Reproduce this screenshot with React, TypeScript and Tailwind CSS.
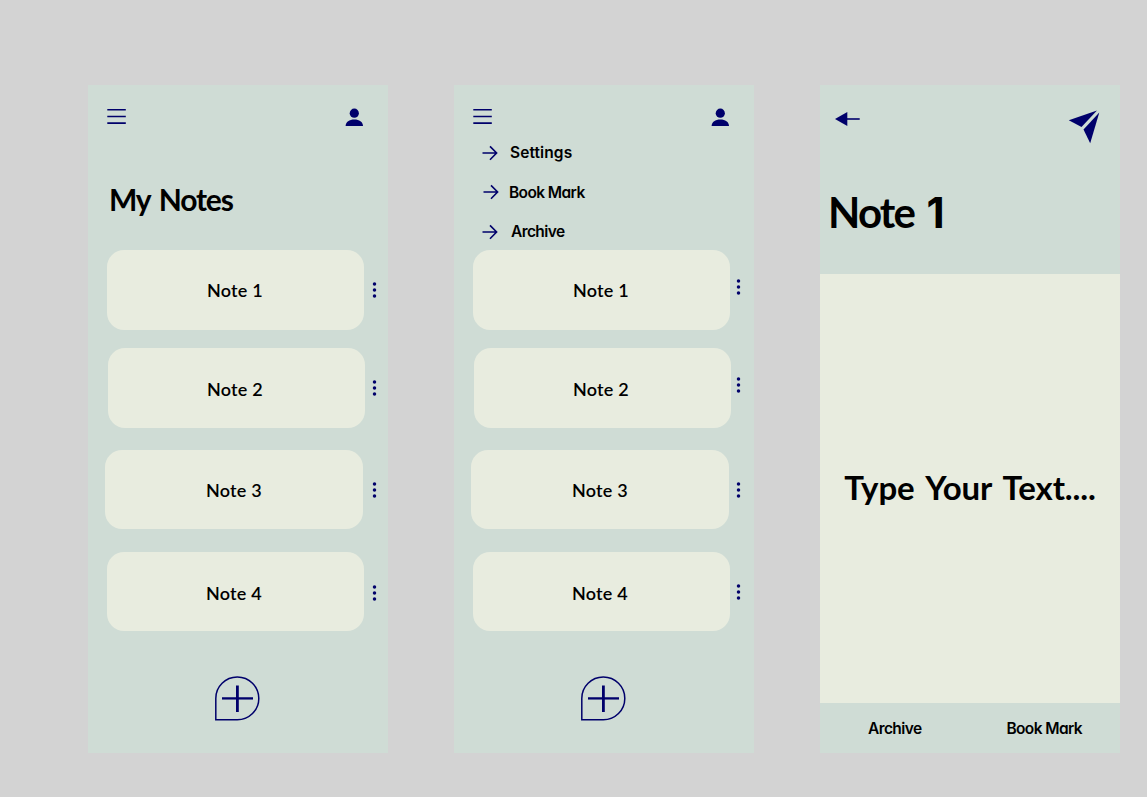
import React from "react";

type Note = { label: string; card: string; text: string; dots: string };

const homeNotes: Note[] = [
  { label: "Note 1", card: "ml-[19px] h-[80px] w-[257px]", text: "pr-[1px]", dots: "left-[283.8px] top-[31px]" },
  { label: "Note 2", card: "ml-[20px] mt-[18px] h-[80px] w-[257px]", text: "pr-[3px] pt-[1px]", dots: "left-[283.8px] top-[49px]" },
  { label: "Note 3", card: "ml-[17px] mt-[22px] h-[79px] w-[258px]", text: "pt-[1px]", dots: "left-[283.8px] top-[53px]" },
  { label: "Note 4", card: "ml-[19px] mt-[23px] h-[79px] w-[257px]", text: "pt-[2px] pr-[3px]", dots: "left-[283.8px] top-[54.5px]" },
];

const menuDots = [
  "left-[282.2px] top-[27.6px]",
  "left-[282.2px] top-[46px]",
  "left-[282.2px] top-[53px]",
  "left-[282.2px] top-[53.6px]",
];

function Dots({ className }: { className: string }) {
  return (
    <svg className={`absolute ${className}`} width="5" height="18" viewBox="0 0 5 18" fill="#00006b">
      <circle cx="2.5" cy="3.1" r="1.75" />
      <circle cx="2.5" cy="9" r="1.75" />
      <circle cx="2.5" cy="14.9" r="1.75" />
    </svg>
  );
}

function TopBar() {
  return (
    <div className="flex h-[50px] items-start justify-between pl-[19px] pr-[24px] pt-[23px]">
      <svg width="20" height="18" viewBox="0 0 20 18" stroke="#00006b" strokeWidth="1.6">
        <path d="M.3 1.8H18.8M.3 8.5H18.8M.3 15.1H18.8" />
      </svg>
      <svg width="19" height="19" viewBox="0 0 19 19" fill="#00006b">
        <circle cx="9.3" cy="5.2" r="4.6" />
        <path d="M.6 18C.8 13.6 4.3 11.4 9.3 11.4S17.8 13.6 18 18Z" />
      </svg>
    </div>
  );
}

function NoteList({ dots }: { dots?: string[] }) {
  return (
    <div className="flex flex-col">
      {homeNotes.map((n, i) => (
        <div key={n.label} className="relative flex">
          <button className={`flex items-center justify-center rounded-[17px] bg-[#e8ecdf] ${n.card}`}>
            <span className={`font-['Lato',sans-serif] text-[18px] font-semibold leading-6 tracking-[0.25px] ${n.text}`}>
              {n.label}
            </span>
          </button>
          <Dots className={dots ? dots[i] : n.dots} />
        </div>
      ))}
    </div>
  );
}

function AddButton() {
  return (
    <button className="ml-[126px] mt-[44px] block h-[48px] w-[48px]">
      <svg width="48" height="48" viewBox="0 0 48 48" fill="none" stroke="#00006b">
        <path d="M1.8 44.7V23.4A21.5 21.3 0 1 1 23.3 44.7Z" strokeWidth="1.5" />
        <path d="M8 23.4H39" strokeWidth="2.3" />
        <path d="M23.4 10.5V37" strokeWidth="2.8" />
      </svg>
    </button>
  );
}

function MenuItem({ label, className, text }: { label: string; className: string; text: string }) {
  return (
    <div className={`flex h-[20px] items-center ${className}`}>
      <svg width="16" height="16" viewBox="0 0 16 16" fill="none" stroke="#00006b" strokeWidth="1.6">
        <path d="M.5 8H14.6M8 1.4L14.6 8L8 14.7" />
      </svg>
      <span className={`font-['Inter',sans-serif] text-[15.5px] font-semibold leading-5 [font-feature-settings:'cv11'] ${text}`}>
        {label}
      </span>
    </div>
  );
}

const panel = "h-[668px] w-[300px] shrink-0 bg-[#cfdcd5]";

export default function App() {
  return (
    <main className="flex h-[797px] w-[1147px] gap-[66px] overflow-hidden bg-[#d3d3d3] pl-[88px] pt-[85px] text-black">
      <section className={panel}>
        <TopBar />
        <div className="h-[115px] pl-[21px] pt-[44px]">
          <h1 className="font-['Lato',sans-serif] text-[30px] font-bold leading-[40px] tracking-[-1.2px] [word-spacing:3px]">My Notes</h1>
        </div>
        <NoteList />
        <AddButton />
      </section>

      <section className={panel}>
        <TopBar />
        <nav className="h-[115px] pt-[8px]">
          <MenuItem label="Settings" className="pl-[28px]" text="ml-[12px] tracking-[0.1px]" />
          <MenuItem label="Book Mark" className="mt-[19px] pl-[29px]" text="ml-[10px] pt-[2px] tracking-[-0.6px]" />
          <MenuItem label="Archive" className="mt-[20px] pl-[28px]" text="ml-[13px] tracking-[-0.6px]" />
        </nav>
        <NoteList dots={menuDots} />
        <AddButton />
      </section>

      <section className={`flex flex-col ${panel}`}>
        <header className="h-[189px]">
          <div className="flex h-[97px] items-start justify-between pl-[15px] pr-[20px] pt-[24px]">
            <svg className="mt-[2px]" width="26" height="16" viewBox="0 0 26 16" fill="#00006b">
              <path d="M0 8L12.3 1V15Z" />
              <path d="M12 7.2H24.7V8.8H12Z" />
            </svg>
            <svg width="32" height="36" viewBox="0 0 32 36" fill="#00006b">
              <path d="M.8 11.3L29 1.6L13.5 18.1Z" />
              <path d="M31.3 3.5L22.2 34.3L15.5 20.4Z" />
            </svg>
          </div>
          <h1 className="pl-[8px] font-['Lato',sans-serif] text-[42px] font-bold leading-[60px] tracking-[-1.8px] [word-spacing:4px]">
            Note <span className="font-['Inter',sans-serif]">1</span>
          </h1>
        </header>
        <div className="flex h-[429px] items-center justify-center bg-[#e8ecdf] pb-[3px]">
          <p className="whitespace-nowrap font-['Lato',sans-serif] text-[33px] font-bold leading-10 tracking-[-0.1px] [word-spacing:4px]">
            Type Your Text....
          </p>
        </div>
        <footer className="flex h-[50px] items-center justify-between pl-[48px] pr-[38px] pt-[2px] font-['Inter',sans-serif] text-[15.5px] font-semibold leading-5 [font-feature-settings:'cv11']">
          <span className="tracking-[-0.6px]">Archive</span>
          <span className="tracking-[-0.6px]">Book Mark</span>
        </footer>
      </section>
    </main>
  );
}
